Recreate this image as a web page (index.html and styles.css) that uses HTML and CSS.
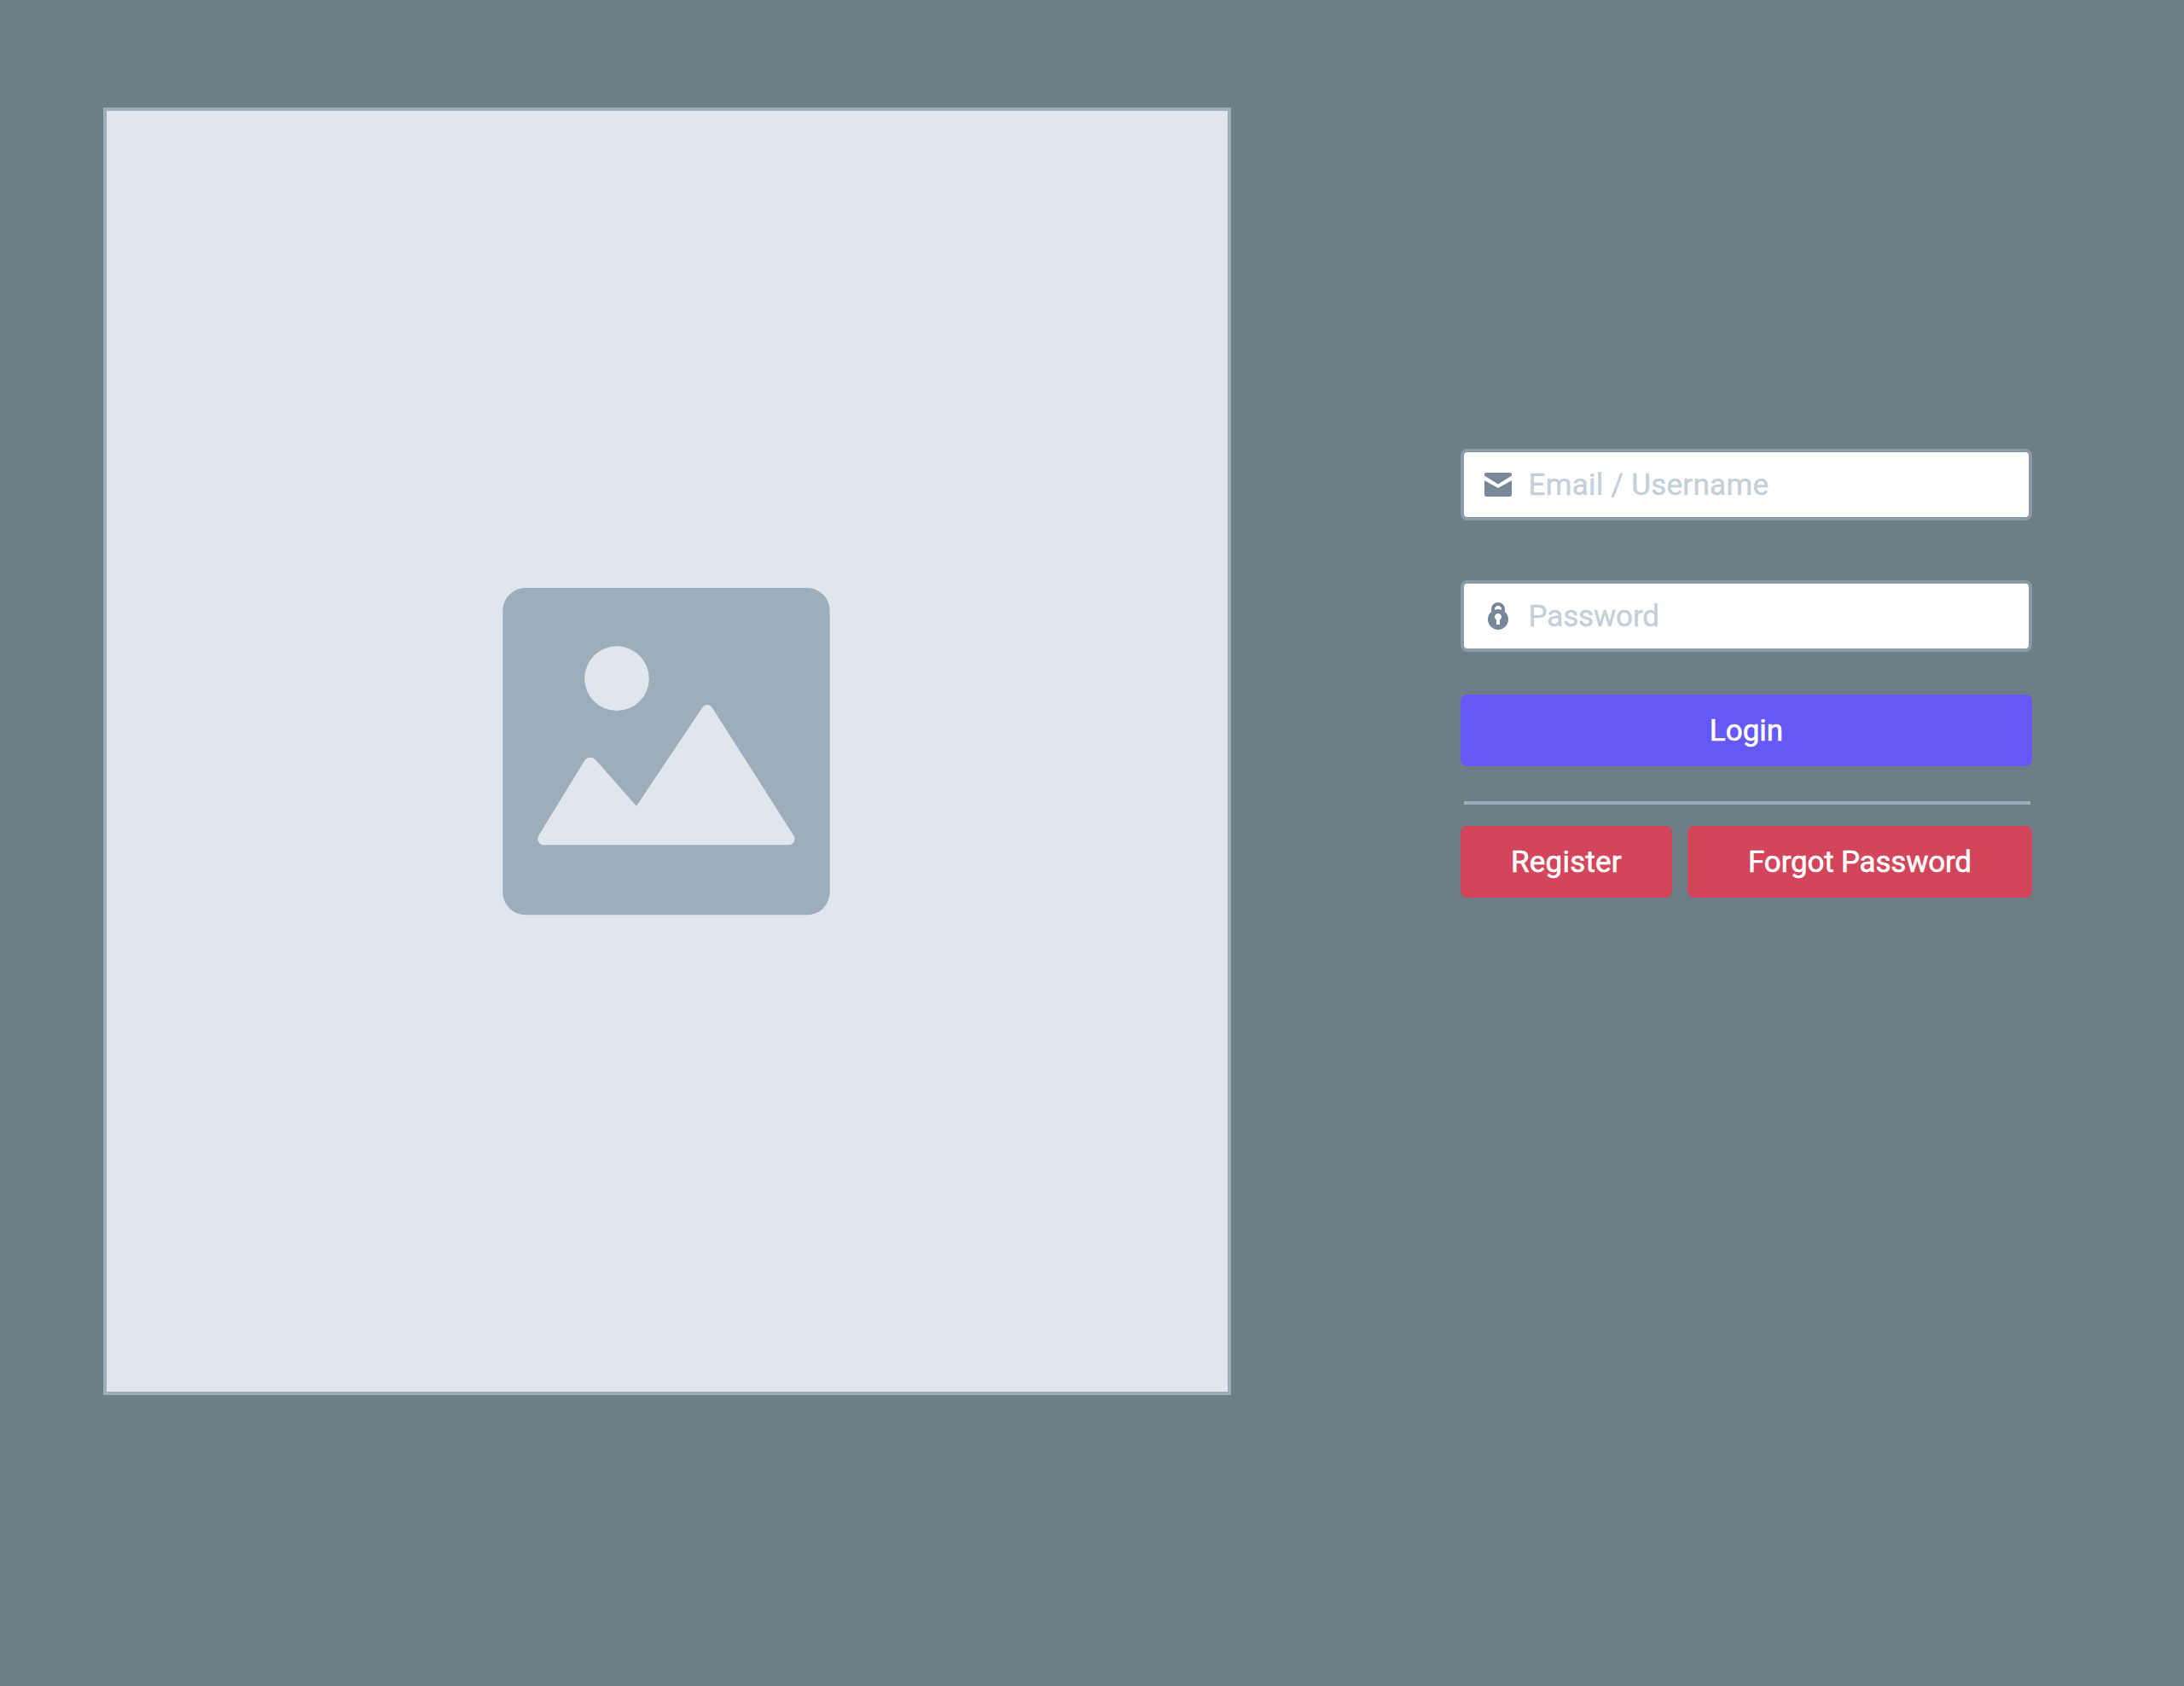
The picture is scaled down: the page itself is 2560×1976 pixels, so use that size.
FILE: index.html
```html
<!DOCTYPE html>
<html lang="en">
<head>
<meta charset="utf-8">
<title>Login</title>
<link rel="stylesheet" href="styles.css">
</head>
<body>
<main class="page">
  <section class="hero">
    <svg class="hero-icon" viewBox="57 57 1152 1152" aria-hidden="true">
      <rect class="hero-frame" x="58" y="57" width="1150" height="1150" rx="80"/>
      <circle class="hero-shape" cx="459" cy="375.500" r="113.500"/>
      <path class="hero-shape" d="M345 665Q353 653 366 653Q376 653 386 663L528 824L757 482Q765 468 777 468Q788 468 797 482L1080 926Q1086 934 1084 944Q1080 961 1062 961H204Q187 961 181 944Q180 935 185 926Z"/>
    </svg>
  </section>
  <form class="login">
    <label class="field">
      <svg class="field-icon" viewBox="0 0 32 32" aria-hidden="true">
        <path d="M0 5.500V4Q0 2 2 2H30Q32 2 32 4V5.500L16 15.500Z"/>
        <path d="M0 11L16 20L32 11V28Q32 30 30 30H2Q0 30 0 28Z"/>
      </svg>
      <span class="placeholder placeholder-email">Email / Username</span>
    </label>
    <label class="field">
      <svg class="field-icon" viewBox="0 0 32 32" aria-hidden="true">
        <path fill-rule="evenodd" d="M8 11V8A8 8 0 0 1 24 8V11A12 12 0 1 1 8 11ZM12 8.700Q16 7.300 20 8.700Q20 4 16 4Q12 4 12 8.700ZM14 20.500V26H18V20.500A4 4 0 1 0 14 20.500Z"/>
      </svg>
      <span class="placeholder placeholder-password">Password</span>
    </label>
    <button class="button button-login" type="button">Login</button>
    <hr class="divider">
    <div class="actions">
      <button class="button button-register" type="button">Register</button>
      <button class="button button-forgot" type="button">Forgot Password</button>
    </div>
  </form>
</main>
</body>
</html>
```
FILE: styles.css
```css
* {
  box-sizing: border-box;
}

body {
  margin: 0;
  background: #6f7d87;
  font-family: Roboto, "Liberation Sans", sans-serif;
}

.page {
  display: grid;
  grid-template-columns: 1322px 670px;
  column-gap: 269px;
  align-items: start;
  height: 1976px;
  padding: 126px 0 0 121px;
  overflow: hidden;
}

.hero {
  display: flex;
  align-items: center;
  justify-content: center;
  height: 1509px;
  padding-right: 2px;
  background: #dfe6ee;
  border: 4px solid #9dadb9;
}

.hero-icon {
  width: 384px;
  height: 384px;
}

.hero-frame {
  fill: #9dadb9;
}

.hero-shape {
  fill: #dfe6ee;
}

.login {
  display: flex;
  flex-direction: column;
  padding-top: 400px;
}

.field {
  display: flex;
  align-items: center;
  gap: 19.5px;
  height: 84px;
  margin-bottom: 70px;
  padding-left: 24px;
  background: #fff;
  border: 4px solid #8a9aa9;
  border-radius: 8px;
}

.field + .field {
  margin-bottom: 50px;
}

.field-icon {
  width: 32px;
  height: 32px;
  fill: #778899;
}

.placeholder {
  padding-top: 2px;
  color: #c3cfd9;
  font-size: 35px;
  line-height: 40px;
  -webkit-text-stroke: 0.4px currentColor;
}

.placeholder-email {
  letter-spacing: 0.28px;
}

.placeholder-password {
  letter-spacing: -0.15px;
}

.button {
  height: 84px;
  padding: 2px 0 0;
  border: 0;
  border-radius: 8px;
  color: #fff;
  font: 400 35px/40px Roboto, "Liberation Sans", sans-serif;
  -webkit-text-stroke: 0.6px currentColor;
}

.button-login {
  background: #6558f5;
}

.divider {
  width: 664px;
  height: 4px;
  margin: 41px 0 25px 4px;
  border: 0;
  background: #9dadb9;
}

.actions {
  display: grid;
  grid-template-columns: 248px 404px;
  gap: 18px;
}

.button-register,
.button-forgot {
  background: #d3455b;
}

.button-register {
  letter-spacing: 0.2px;
}

.button-forgot {
  letter-spacing: -0.2px;
}
```
